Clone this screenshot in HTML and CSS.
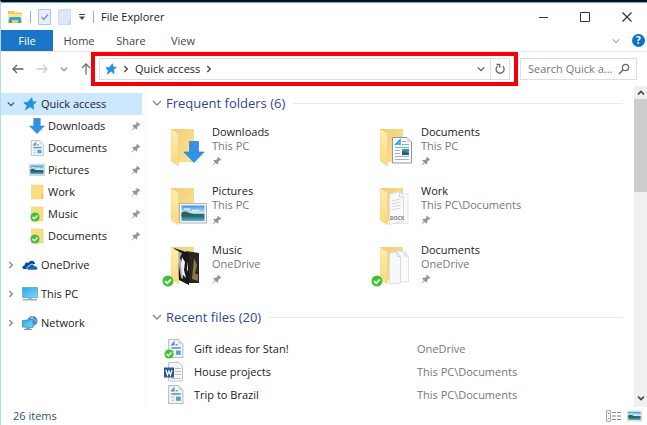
FILE: index.html
```html
<!DOCTYPE html>
<html lang="en">
<head>
<meta charset="utf-8">
<title>File Explorer</title>
<link rel="stylesheet" href="styles.css">
</head>
<body>
<svg class="defs" aria-hidden="true">
  <defs>
    <linearGradient id="gold" x1="0" y1="0" x2="1" y2="1"><stop offset="0" stop-color="#f0cd72"/><stop offset="1" stop-color="#fbe49a"/></linearGradient>
    <linearGradient id="flapFill" x1="0" y1="0" x2="0" y2="1"><stop offset="0" stop-color="#ffedb4"/><stop offset="1" stop-color="#fcd979"/></linearGradient>
    <linearGradient id="sky" x1="0" y1="0" x2="0" y2="1"><stop offset="0" stop-color="#3f8fe0"/><stop offset=".5" stop-color="#d7efff"/><stop offset=".55" stop-color="#36735d"/><stop offset=".7" stop-color="#296b77"/><stop offset="1" stop-color="#5fb2d5"/></linearGradient>
    <linearGradient id="screen" x1="0" y1="0" x2="1" y2="1"><stop offset="0" stop-color="#29a9e8"/><stop offset="1" stop-color="#7fd5fa"/></linearGradient>
    <symbol id="star" viewBox="0 0 14 14"><path fill="#2491e0" stroke="#2491e0" stroke-width=".8" stroke-linejoin="round" d="M8.700.8 9.500 4.600 13.300 5 10.200 7.500 10.600 12.300 7.200 9.700 2.400 13 4.100 8.800.8 5.700 5.300 5Z"/></symbol>
    <symbol id="pin" viewBox="0 0 10 10"><path fill="#8796a3" d="M6 .8 9.300 3.700 8.400 4.400 7.700 4.200 6.200 6.100 6.200 8 5.300 8.500 3.700 7 .7 9.500.5 9.200 2.900 6.200 1.300 4.700 1.900 3.800 3.800 3.900 5.700 2.400 5.400 1.500Z"/></symbol>
    <symbol id="right" viewBox="0 0 8 8"><path fill="none" stroke="currentColor" stroke-width="1.300" d="m2.300 1 3 3-3 3"/></symbol>
    <symbol id="down" viewBox="0 0 10 8"><path fill="none" stroke="currentColor" stroke-width="1.400" d="m1 2 4 4 4-4"/></symbol>
    <symbol id="arrow" viewBox="0 0 22 22"><path fill="#3193e6" stroke="#2b80ce" stroke-width=".7" d="M6.500.5h9v10.500h5.700L11 21.500.800 11h5.700Z"/></symbol>
    <symbol id="check" viewBox="0 0 12 12"><circle cx="6" cy="6" r="5.500" fill="#3dc333"/><path fill="none" stroke="#fff" stroke-width="1.700" d="m3 6 2.200 2.200L9 4.300"/></symbol>
    <symbol id="folder" viewBox="0 0 24 38"><path fill="url(#gold)" d="M0 0h23v33H4Z"/></symbol>
    <symbol id="flap" viewBox="0 0 9 38"><path fill="url(#flapFill)" stroke="#efca6c" stroke-width=".4" d="m0 0 7.500 4.500V37L0 32Z"/></symbol>
    <symbol id="photo" viewBox="0 0 28 21"><path fill="#f3f6f8" stroke="#aab4bb" d="M.5.5h27v19.500H.5Z"/><path fill="url(#sky)" d="M2.500 2.500h23V18h-23Z"/><path fill="#286554" d="M2.500 9.500c5-3 7 1 12 1.500l8 1.500-20 1Z"/><path stroke="#fff" stroke-width="1.500" opacity=".7" d="M5 6h6M13 7.500h7"/></symbol>
    <symbol id="page" viewBox="0 0 20 27"><path fill="#f8fafb" stroke="#8c979d" d="M.5.5H15L19.500 5v21H.5Z"/><path fill="#d4dadd" d="M15 .5 19.500 5H15Z"/><path fill="none" stroke="#3398d7" stroke-width="1.500" d="m3 8 5-5v5M4.500 7H8"/><path stroke="#74b7df" d="M10 4.500h4M10 7.500h7M3 10.500h14"/><path stroke="#a4b1b9" d="M3 13.500h5M3 16.500h5M3 19.500h14M3 22.500h14"/><path fill="#3e91bb" d="M10 12h7v6h-7Z"/><path fill="#275d70" d="m10 15 3-1 4 3v1h-7Z"/></symbol>
    <symbol id="doc" viewBox="0 0 16 18"><path fill="#f3f6f8" stroke="#b5bec4" d="M1.500.5h9L15 5v12.500H1.500Z"/><path fill="#d8dfe3" d="M10.500.5V5H15Z"/><path stroke="#7f8fdc" stroke-width="1.400" d="m4 6 2.500-3v3M8 5.500h2"/><path stroke="#4a9fae" stroke-width="1.500" d="M4 8.500h9"/><path stroke="#a8c6d6" d="M4 11.500h3M4 14.500h3"/><path fill="#4ba6cf" d="M8.500 11h4.500v4H8.500Z"/></symbol>
  </defs>
</svg>

<div class="window">
  <header class="titlebar">
    <svg class="i16" viewBox="0 0 16 16"><path fill="#f5c94e" d="M1 2h6l1 1.500h7V14H1Z"/><path fill="#ffe58e" d="M1 5h14v6H1Z"/><path fill="#2ca5e5" d="M2 14V9.500Q2 8 4 8h8q2 0 2 1.500V14h-3v-3H5v3Z"/></svg>
    <span class="bar"></span>
    <button class="plain" aria-label="Properties"><svg class="quick" viewBox="0 0 13 16"><path fill="#e6eefa" stroke="#b2c4df" d="M.5.5h12v15H.5Z"/><path fill="none" stroke="#7697c5" stroke-width="1.300" d="m3.500 8 2.300 2.500L10 5.500"/></svg></button>
    <button class="plain" aria-label="New folder"><svg class="quick" viewBox="0 0 13 16"><path fill="#dde7f7" stroke="#d0dcef" d="M.5.5h12v15H.5Z"/><path fill="#c9d7ee" d="M10 12h3v4h-3Z"/></svg></button>
    <button class="plain" aria-label="Customize toolbar"><svg class="i8" viewBox="0 0 8 8"><path fill="#444" d="M1 1h6v1H1Zm0 2.500h6L4 7Z"/></svg></button>
    <span class="bar"></span>
    <h1 class="title">File Explorer</h1>
    <div class="controls">
      <button class="plain" aria-label="Minimize"><svg class="i12" viewBox="0 0 12 12"><path stroke="#333" d="M2 6.500h9"/></svg></button>
      <button class="plain" aria-label="Maximize"><svg class="i12" viewBox="0 0 12 12"><path fill="none" stroke="#333" d="M1.500 1.500h9v9h-9Z"/></svg></button>
      <button class="plain" aria-label="Close"><svg class="i12" viewBox="0 0 12 12"><path stroke="#333" stroke-width="1.200" d="m1.500 1.500 9 9m0-9-9 9"/></svg></button>
    </div>
  </header>

  <nav class="tabs">
    <button class="tab tab-file">File</button>
    <button class="tab">Home</button>
    <button class="tab">Share</button>
    <button class="tab">View</button>
    <div class="tabs-end">
      <button class="plain faint" aria-label="Expand ribbon"><svg class="i8"><use href="#down"/></svg></button>
      <button class="help" aria-label="Help">?</button>
    </div>
  </nav>

  <div class="toolbar">
    <div class="history">
      <button class="plain" aria-label="Back"><svg class="i12" viewBox="0 0 12 12"><path fill="none" stroke="#666" stroke-width="1.400" d="M11.500 6H1.200M5 2 1 6l4 4"/></svg></button>
      <button class="plain" aria-label="Forward"><svg class="i12" viewBox="0 0 12 12"><path fill="none" stroke="#ccc" stroke-width="1.300" d="M.5 6h10.300M7 2l4 4-4 4"/></svg></button>
      <button class="plain gray" aria-label="Recent locations"><svg class="i8"><use href="#down"/></svg></button>
      <button class="plain" aria-label="Up"><svg class="i12" viewBox="0 0 12 12"><path fill="none" stroke="#777" stroke-width="1.400" d="M6 11.500V1.200M2 5l4-4 4 4"/></svg></button>
    </div>
    <div class="address">
      <svg class="i12"><use href="#star"/></svg>
      <svg class="i8 dark"><use href="#right"/></svg>
      <a class="crumb" href="#quick">Quick access</a>
      <svg class="i8 dark"><use href="#right"/></svg>
      <button class="plain address-drop" aria-label="Previous locations"><svg class="i8"><use href="#down"/></svg></button>
      <button class="plain refresh" aria-label="Refresh"><svg class="i12" viewBox="0 0 12 12"><path fill="none" stroke="#666" stroke-width="1.300" d="M3.500 3.200A4 4 0 1 0 8.800 3.300M2.500 1.500h3.200v3.300"/></svg></button>
    </div>
    <div class="search">
      <input type="text" aria-label="Search Quick access" placeholder="Search Quick a...">
      <svg class="i12" viewBox="0 0 12 12"><circle cx="7.500" cy="4.500" r="3.200" fill="none" stroke="#666" stroke-width="1.200"/><path stroke="#666" stroke-width="1.400" d="M5.200 6.800 1 11"/></svg>
    </div>
  </div>

  <div class="body">
    <nav class="sidebar">
      <a class="node selected" href="#quick"><svg class="i8 dark"><use href="#down"/></svg><svg class="i16 star"><use href="#star"/></svg><span>Quick access</span></a>
      <a class="node child" href="#d"><svg class="i16"><use href="#arrow"/></svg><span>Downloads</span><svg class="pin"><use href="#pin"/></svg></a>
      <a class="node child" href="#d"><svg class="i16"><use href="#doc"/></svg><span>Documents</span><svg class="pin"><use href="#pin"/></svg></a>
      <a class="node child" href="#d"><svg class="i16"><use href="#photo"/></svg><span>Pictures</span><svg class="pin"><use href="#pin"/></svg></a>
      <a class="node child" href="#d"><svg class="i16" viewBox="0 0 16 16"><path fill="#fadc83" stroke="#efcc68" stroke-width=".6" d="M2.500 1H14v14H2.500Z"/><path fill="#e9bf54" d="M12.500 10H14v5h-1.500Z"/></svg><span>Work</span><svg class="pin"><use href="#pin"/></svg></a>
      <a class="node child" href="#d"><svg class="i16" viewBox="0 0 16 16"><path fill="#fadc83" stroke="#efcc68" stroke-width=".6" d="M2.500 1H14v14H2.500Z"/><use href="#check" x="1" y="6" width="10" height="10"/></svg><span>Music</span><svg class="pin"><use href="#pin"/></svg></a>
      <a class="node child" href="#d"><svg class="i16" viewBox="0 0 16 16"><path fill="#fadc83" stroke="#efcc68" stroke-width=".6" d="M2.500 1H14v14H2.500Z"/><use href="#check" x="1" y="6" width="10" height="10"/></svg><span>Documents</span><svg class="pin"><use href="#pin"/></svg></a>
      <a class="node root" href="#o"><svg class="i8 gray"><use href="#right"/></svg><svg class="i16" viewBox="0 0 16 16"><path fill="#0a4aa6" d="M1.500 12C-.5 11 .5 8.500 2.500 8.500 2.500 6 5 5 6.500 6 8 2.500 13 3 13 7L9 7.500 6 9l-1 3Z"/><path fill="#1465c3" stroke="#fff" stroke-width=".6" d="M6 13c-2-1-1-4 1-3.700C8 6.500 11.500 6.500 12.500 9c3-.5 4 3 2 4Z"/></svg><span>OneDrive</span></a>
      <a class="node root" href="#p"><svg class="i8 gray"><use href="#right"/></svg><svg class="i16" viewBox="0 0 16 16"><path fill="url(#screen)" stroke="#4e9fc4" stroke-width=".7" d="M.5 1.500h15v10H.5Z"/><path fill="#9eb0ba" d="M6 12h4v1h5v1.500H1V13h5Z"/></svg><span>This PC</span></a>
      <a class="node root" href="#n"><svg class="i8 gray"><use href="#right"/></svg><svg class="i16" viewBox="0 0 16 16"><circle cx="10.500" cy="6" r="5" fill="#428fb9"/><path fill="none" stroke="#a8d6e9" stroke-width=".9" d="M8 3c3 0 5 2 6.500 4M11 1c-2 3-1 6 1 9"/><path fill="url(#screen)" stroke="#3e86a9" stroke-width=".8" d="M.5 5.500 11 4.500v8L.5 12Z"/><path fill="#789baa" d="M4 12.500h4V14h2v1H2v-1h2Z"/></svg><span>Network</span></a>
    </nav>

    <main class="content">
      <h2 class="group"><svg class="chev gray"><use href="#down"/></svg>Frequent folders (6)</h2>
      <div class="tiles">
        <a class="tile" href="#d"><svg class="art" viewBox="0 0 46 46"><use href="#folder" x="9" y="4" width="24" height="38"/><use href="#flap" x="9" y="4" width="9" height="38"/><use href="#arrow" x="21" y="16" width="22" height="22"/></svg><span class="label"><b>Downloads</b><i>This PC</i><svg class="pin"><use href="#pin"/></svg></span></a>
        <a class="tile" href="#d"><svg class="art" viewBox="0 0 46 46"><use href="#folder" x="9" y="4" width="24" height="38"/><use href="#flap" x="9" y="4" width="9" height="38"/><use href="#page" x="21" y="12" width="20" height="27"/></svg><span class="label"><b>Documents</b><i>This PC</i><svg class="pin"><use href="#pin"/></svg></span></a>
        <a class="tile" href="#d"><svg class="art" viewBox="0 0 46 46"><use href="#folder" x="9" y="4" width="24" height="38"/><use href="#flap" x="9" y="4" width="9" height="38"/><use href="#photo" x="17" y="19" width="28" height="21"/></svg><span class="label"><b>Pictures</b><i>This PC</i><svg class="pin"><use href="#pin"/></svg></span></a>
        <a class="tile" href="#d"><svg class="art" viewBox="0 0 46 46"><use href="#folder" x="9" y="4" width="24" height="38"/><path fill="#f8f9fa" stroke="#e2e5e7" d="M24 9.500h13v30H24Z"/><path fill="#fafafa" stroke="#dadde0" d="m18.500 10 10-2.500 4 5V37l-14 3.500Z"/><path fill="none" stroke="#c9cdd1" stroke-width=".8" d="m20.500 17 9-2m-9 5 9-2m-9 5 9-2m-9 5 9-2M28.500 8v5h4"/><text x="19" y="36" class="docx">DOCX</text><use href="#flap" x="9" y="4" width="9" height="38"/></svg><span class="label"><b>Work</b><i>This PC\Documents</i><svg class="pin"><use href="#pin"/></svg></span></a>
        <a class="tile" href="#d"><svg class="art" viewBox="0 0 46 46"><use href="#folder" x="9" y="4" width="24" height="38"/><path fill="#29261f" d="m24 8 13 2v30H24Z"/><path fill="#8e744b" d="m32 15 3 7-2 9h3v7l-6-2Z"/><path fill="#17181c" d="m12 5 15 5v32l-10-5Z"/><path fill="#a6a9ad" d="m13 7 7 3-2 5 3 6v15l-2-1-2-12Z"/><path fill="#f0f1f2" d="m20 14 3 5-1 8 2 8-4-4-1-9Zm5 4 1 8-1 3Z"/><use href="#flap" x="9" y="4" width="9" height="38"/><use href="#check" x="0" y="32" width="12" height="12"/></svg><span class="label"><b>Music</b><i>OneDrive</i><svg class="pin"><use href="#pin"/></svg></span></a>
        <a class="tile" href="#d"><svg class="art" viewBox="0 0 46 46"><use href="#folder" x="9" y="4" width="24" height="38"/><path fill="#fafafa" stroke="#dfe2e4" d="m25.500 8 9 1 3 4v26h-12Z"/><path fill="#f7f8f9" stroke="#d8dcdf" d="m18.500 10 7-1.500 4 5V40l-11 1Z"/><path fill="none" stroke="#ccd2d5" d="m25.500 8.500 1 5h3M34 9v4h3"/><use href="#flap" x="9" y="4" width="9" height="38"/><use href="#check" x="0" y="32" width="12" height="12"/></svg><span class="label"><b>Documents</b><i>OneDrive</i><svg class="pin"><use href="#pin"/></svg></span></a>
      </div>
      <h2 class="group"><svg class="chev gray"><use href="#down"/></svg>Recent files (20)</h2>
      <table class="files">
        <tr><td class="kind"><svg class="file" viewBox="0 0 20 20"><use href="#doc" x="3" y="0" width="17" height="19"/><use href="#check" x="0" y="10" width="10" height="10"/></svg></td><td class="name">Gift ideas for Stan!</td><td class="place">OneDrive</td></tr>
        <tr><td class="kind"><svg class="file" viewBox="0 0 20 20"><path fill="#f6f7f8" stroke="#bec4c8" d="M4.500.5h10L18.500 4v15h-14Z"/><path stroke="#b7bfc6" d="M11 6.500h6M11 9.500h6M11 12.500h6M7 16.500h10"/><path fill="#2b5797" d="M0 5.500h10v10H0Z"/><path fill="none" stroke="#fff" stroke-width="1.200" d="m2 8 1.500 5L5 9l1.500 4L8 8"/></svg></td><td class="name">House projects</td><td class="place">This PC\Documents</td></tr>
        <tr><td class="kind"><svg class="file" viewBox="0 0 20 20"><use href="#doc" x="3" y="0" width="17" height="19"/></svg></td><td class="name">Trip to Brazil</td><td class="place">This PC\Documents</td></tr>
      </table>
    </main>

    <div class="scrollbar">
      <button class="plain" aria-label="Scroll up"><svg class="i8" viewBox="0 0 8 8"><path fill="none" stroke="#444" stroke-width="1.700" d="m1 5.500 3-3 3 3"/></svg></button>
      <div class="track"><div class="thumb"></div></div>
      <button class="plain" aria-label="Scroll down"><svg class="i8" viewBox="0 0 8 8"><path fill="none" stroke="#444" stroke-width="1.700" d="m1 2.500 3 3 3-3"/></svg></button>
    </div>
  </div>

  <footer class="status">
    <span>26 items</span>
    <div class="views">
      <button class="plain" aria-label="Details view"><svg class="view" viewBox="0 0 15 12"><path fill="#eef1f3" stroke="#a7adb2" d="M.5.5h4v11h-4Z"/><path fill="#c77" d="M2 8h1v1H2Z"/><path fill="#579" d="M2 3h1v1H2Z"/><path stroke="#888" stroke-dasharray="4 1" d="M6 2.500h9M6 6h9M6 9.500h9"/></svg></button>
      <button class="plain" aria-label="Large icons view"><svg class="view" viewBox="0 0 28 21"><use href="#photo"/></svg></button>
    </div>
  </footer>
</div>
</body>
</html>
```
FILE: styles.css
```css
* { box-sizing: border-box; }
body {
  margin: 0;
  background: #fff;
  color: #222;
  font: 11px/14px "Open Sans", "Noto Sans", sans-serif;
}
button, input { font: inherit; color: inherit; }
a { color: inherit; text-decoration: none; }
svg { display: block; flex: none; }
.defs { position: absolute; width: 0; height: 0; }

.window {
  display: flex;
  flex-direction: column;
  min-height: 100vh;
  border-top: 2px solid #0b0f13;
  border-left: 1px solid #b5d9f5;
}
.plain { display: flex; align-items: center; justify-content: center; padding: 0; border: 0; background: none; }
.i8 { width: 8px; height: 8px; }
.i12 { width: 12px; height: 12px; }
.i16 { width: 16px; height: 16px; }
.chev { width: 10px; height: 8px; }
.pin { width: 10px; height: 10px; }
.dark { color: #444; }
.gray { color: #888; }
.faint { color: #aaa; }

.titlebar { display: flex; align-items: center; gap: 7px; height: 28px; padding: 0 14px 0 6px; border-top: 1px solid #5cb3ef; }
.bar { width: 1px; height: 12px; background: #aaa; }
.quick { width: 13px; height: 16px; }
.title { margin: 0; font-size: 11px; font-weight: 400; }
.controls { display: flex; gap: 30px; margin-left: auto; }

.tabs { display: flex; height: 22px; border-bottom: 1px solid #e5e6e7; color: #444; }
.tab { width: 52px; padding: 0; border: 0; background: none; text-align: center; }
.tab-file { background: #1b75c8; color: #fff; }
.tabs-end { display: flex; align-items: center; gap: 12px; margin-left: auto; padding-right: 2px; }
.help { width: 13px; height: 13px; padding: 0; border: 0; border-radius: 50%; background: #0b6fcd; color: #fff; font-size: 10px; font-weight: 700; line-height: 13px; }

.toolbar { display: flex; align-items: center; height: 34px; padding: 0 10px 0 11px; }
.history { display: flex; align-items: center; justify-content: space-between; width: 80px; margin-right: 7px; }
.address { position: relative; display: flex; flex: 1; align-items: center; gap: 5px; height: 22px; padding-left: 5px; border: 1px solid #dedede; }
.address::after { content: ""; position: absolute; inset: -7px -9px; border: 4px solid #f80008; pointer-events: none; }
.address-drop { margin-left: auto; color: #555; }
.refresh { width: 19px; height: 20px; border-left: 1px solid #dedede; }
.search { display: flex; align-items: center; width: 117px; height: 22px; margin-left: 10px; padding: 0 6px 0 7px; border: 1px solid #dedede; }
.search input { flex: 1; min-width: 0; padding: 0; border: 0; outline: 0; background: none; }
.search input::placeholder { color: #777; opacity: 1; }

.body { display: flex; flex: 1; }
.sidebar { display: flex; flex-direction: column; width: 145px; padding: 7px 3px 0 0; border-right: 1px solid #f7f7f7; }
.node { display: flex; align-items: center; height: 22px; padding: 0 1px 0 6px; }
.node .i8 { margin-right: 7px; }
.node .i16 { margin-right: 3px; }
.node .star { padding: 1px; }
.node .pin { margin-left: auto; }
.child { padding-left: 28px; }
.selected { background: #cce8ff; }
.root { margin-top: 7px; }

.content { flex: 1; padding: 6px 12px 0 6px; }
.group { display: flex; align-items: center; gap: 4px; height: 22px; margin: 0; color: #2f459e; font-size: 13px; font-weight: 400; white-space: nowrap; }
.group::after { content: ""; flex: 1; height: 1px; margin-left: 4px; background: #e9e9e9; }
.tiles { display: grid; grid-template-columns: repeat(auto-fill, 209px); padding: 11px 0 4px 10px; }
.tile { display: flex; gap: 4px; height: 59px; }
.art { width: 46px; height: 46px; }
.docx { font: 700 5px "Open Sans", sans-serif; fill: #777; }
.label { display: flex; flex-direction: column; }
.label b { font-weight: 400; }
.label i { color: #777; font-style: normal; }
.label .pin { margin-top: 3px; }

.files { width: 100%; margin-top: 9px; border-collapse: collapse; table-layout: fixed; }
.files td { height: 23px; padding: 0; }
.files .kind { width: 42px; padding-left: 12px; }
.files .name { width: 223px; }
.files .place { color: #777; }
.file { width: 20px; height: 20px; }

.scrollbar { display: flex; flex-direction: column; width: 13px; padding-bottom: 3px; background: #f0f0f0; }
.scrollbar .plain { height: 13px; }
.track { flex: 1; }
.thumb { height: 32%; background: #cdcdcd; }

.status { display: flex; align-items: center; justify-content: space-between; height: 18px; padding: 0 5px 0 12px; color: #34506f; }
.views { display: flex; gap: 6px; }
.view { width: 15px; height: 12px; }
```
